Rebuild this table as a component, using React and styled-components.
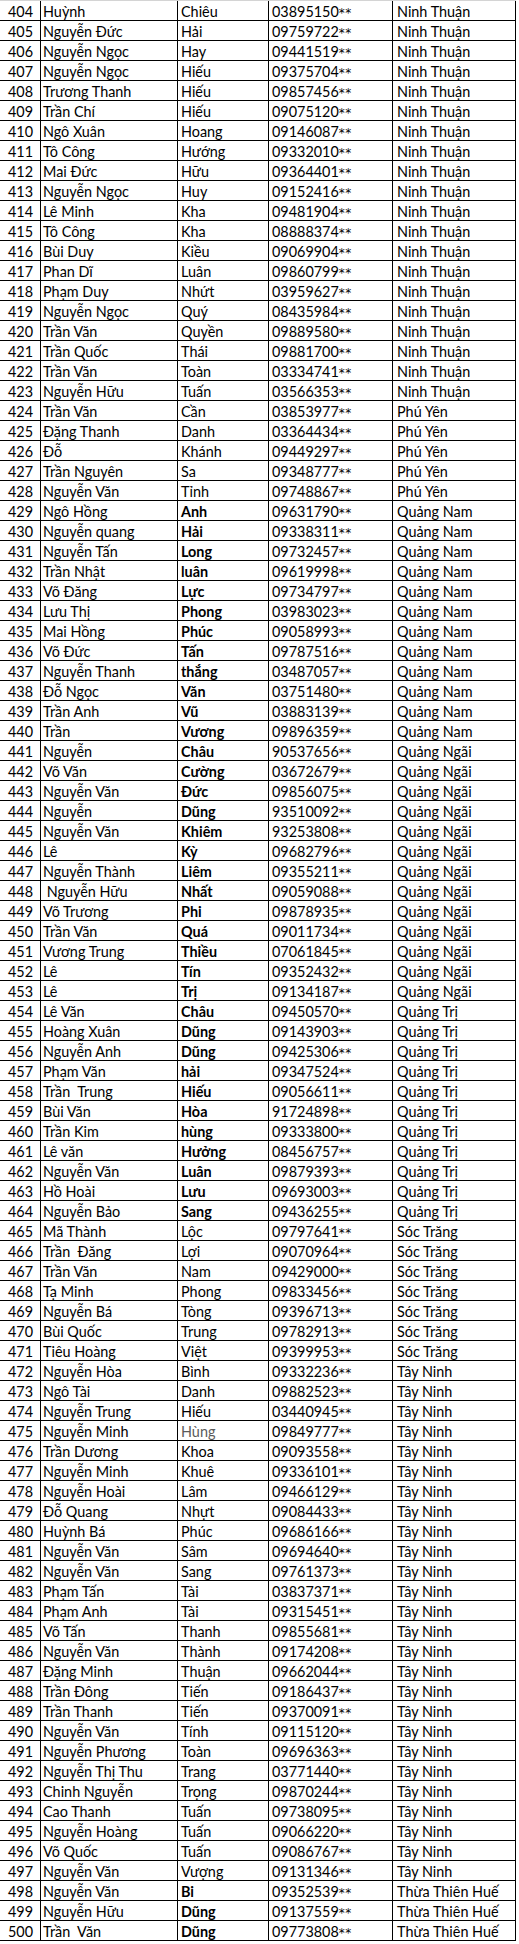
import React from "react";
import styled, { createGlobalStyle } from "styled-components";

const Global = createGlobalStyle`
  html, body { margin: 0; padding: 0; background: #ffffff; }
  body { font-family: Lato, "Open Sans", "Liberation Sans", sans-serif; }
`;

const raw = `404|Huỳnh|Chiêu|03895150|Ninh Thuận
405|Nguyễn Đức|Hải|09759722|Ninh Thuận
406|Nguyễn Ngọc|Hay|09441519|Ninh Thuận
407|Nguyễn Ngọc|Hiếu|09375704|Ninh Thuận
408|Trương Thanh|Hiếu|09857456|Ninh Thuận
409|Trần Chí|Hiếu|09075120|Ninh Thuận
410|Ngô Xuân|Hoang|09146087|Ninh Thuận
411|Tô Công|Hướng|09332010|Ninh Thuận
412|Mai Đức|Hữu|09364401|Ninh Thuận
413|Nguyễn Ngọc|Huy|09152416|Ninh Thuận
414|Lê Minh|Kha|09481904|Ninh Thuận
415|Tô Công|Kha|08888374|Ninh Thuận
416|Bùi Duy|Kiều|09069904|Ninh Thuận
417|Phan Dĩ|Luân|09860799|Ninh Thuận
418|Phạm Duy|Nhứt|03959627|Ninh Thuận
419|Nguyễn Ngọc|Quý|08435984|Ninh Thuận
420|Trần Văn|Quyền|09889580|Ninh Thuận
421|Trần Quốc|Thái|09881700|Ninh Thuận
422|Trần Văn|Toàn|03334741|Ninh Thuận
423|Nguyễn Hữu|Tuấn|03566353|Ninh Thuận
424|Trần Văn|Cần|03853977|Phú Yên
425|Đặng Thanh|Danh|03364434|Phú Yên
426|Đỗ|Khánh|09449297|Phú Yên
427|Trần Nguyên|Sa|09348777|Phú Yên
428|Nguyễn Văn|Tỉnh|09748867|Phú Yên
429|Ngô Hồng|*Anh|09631790|Quảng Nam
430|Nguyễn quang|*Hải|09338311|Quảng Nam
431|Nguyễn Tấn|*Long|09732457|Quảng Nam
432|Trần Nhật|*luân|09619998|Quảng Nam
433|Võ Đăng|*Lực|09734797|Quảng Nam
434|Lưu Thị|*Phong|03983023|Quảng Nam
435|Mai Hồng|*Phúc|09058993|Quảng Nam
436|Võ Đức|*Tấn|09787516|Quảng Nam
437|Nguyễn Thanh|*thắng|03487057|Quảng Nam
438|Đỗ Ngọc|*Văn|03751480|Quảng Nam
439|Trần Anh|*Vũ|03883139|Quảng Nam
440|Trần|*Vương|09896359|Quảng Nam
441|Nguyễn|*Châu|90537656|Quảng Ngãi
442|Võ Văn|*Cường|03672679|Quảng Ngãi
443|Nguyễn Văn|*Đức|09856075|Quảng Ngãi
444|Nguyễn|*Dũng|93510092|Quảng Ngãi
445|Nguyễn Văn|*Khiêm|93253808|Quảng Ngãi
446|Lê|*Kỳ|09682796|Quảng Ngãi
447|Nguyễn Thành|*Liêm|09355211|Quảng Ngãi
448| Nguyễn Hữu|*Nhất|09059088|Quảng Ngãi
449|Võ Trương|*Phi|09878935|Quảng Ngãi
450|Trần Văn|*Quá|09011734|Quảng Ngãi
451|Vương Trung|*Thiều|07061845|Quảng Ngãi
452|Lê|*Tín|09352432|Quảng Ngãi
453|Lê|*Trị|09134187|Quảng Ngãi
454|Lê Văn|*Châu|09450570|Quảng Trị
455|Hoàng Xuân|*Dũng|09143903|Quảng Trị
456|Nguyễn Anh|*Dũng|09425306|Quảng Trị
457|Phạm Văn|*hải|09347524|Quảng Trị
458|Trần  Trung|*Hiếu|09056611|Quảng Trị
459|Bùi Văn|*Hòa|91724898|Quảng Trị
460|Trần Kim|*hùng|09333800|Quảng Trị
461|Lê văn|*Hưởng|08456757|Quảng Trị
462|Nguyễn Văn|*Luân|09879393|Quảng Trị
463|Hồ Hoài|*Lưu|09693003|Quảng Trị
464|Nguyễn Bảo|*Sang|09436255|Quảng Trị
465|Mã Thành|Lộc|09797641|Sóc Trăng
466|Trần  Đăng|Lợi|09070964|Sóc Trăng
467|Trần Văn|Nam|09429000|Sóc Trăng
468|Tạ Minh|Phong|09833456|Sóc Trăng
469|Nguyễn Bá|Tòng|09396713|Sóc Trăng
470|Bùi Quốc|Trung|09782913|Sóc Trăng
471|Tiêu Hoàng|Việt|09399953|Sóc Trăng
472|Nguyễn Hòa|Bình|09332236|Tây Ninh
473|Ngô Tài|Danh|09882523|Tây Ninh
474|Nguyễn Trung|Hiếu|03440945|Tây Ninh
475|Nguyễn Minh|~Hùng|09849777|Tây Ninh
476|Trần Dương|Khoa|09093558|Tây Ninh
477|Nguyễn Minh|Khuê|09336101|Tây Ninh
478|Nguyễn Hoài|Lâm|09466129|Tây Ninh
479|Đỗ Quang|Nhựt|09084433|Tây Ninh
480|Huỳnh Bá|Phúc|09686166|Tây Ninh
481|Nguyễn Văn|Sâm|09694640|Tây Ninh
482|Nguyễn Văn|Sang|09761373|Tây Ninh
483|Phạm Tấn|Tài|03837371|Tây Ninh
484|Phạm Anh|Tài|09315451|Tây Ninh
485|Võ Tấn|Thanh|09855681|Tây Ninh
486|Nguyễn Văn|Thành|09174208|Tây Ninh
487|Đặng Minh|Thuận|09662044|Tây Ninh
488|Trần Đông|Tiến|09186437|Tây Ninh
489|Trần Thanh|Tiến|09370091|Tây Ninh
490|Nguyễn Văn|Tính|09115120|Tây Ninh
491|Nguyễn Phương|Toàn|09696363|Tây Ninh
492|Nguyễn Thị Thu|Trang|03771440|Tây Ninh
493|Chinh Nguyễn|Trọng|09870244|Tây Ninh
494|Cao Thanh|Tuấn|09738095|Tây Ninh
495|Nguyễn Hoàng|Tuấn|09066220|Tây Ninh
496|Võ Quốc|Tuấn|09086767|Tây Ninh
497|Nguyễn Văn|Vượng|09131346|Tây Ninh
498|Nguyễn Văn|*Bi|09352539|Thừa Thiên Huế
499|Nguyễn Hữu|*Dũng|09137559|Thừa Thiên Huế
500|Trần  Văn|*Dũng|09773808|Thừa Thiên Huế`;

const rows = raw.split("\n").map((line) => {
  const [no, last, first, phone, province] = line.split("|");
  const bold = first.startsWith("*");
  const muted = first.startsWith("~");
  return {
    no,
    last,
    first: bold || muted ? first.slice(1) : first,
    bold,
    muted,
    phone,
    province,
  };
});

const Sheet = styled.div`
  width: 516px;
  border-top: 1px solid #d4d4d4;
  color: #000;
  font-family: Lato, "Open Sans", "Liberation Sans", sans-serif;
  font-size: 14.4px;
`;

const Row = styled.div`
  display: grid;
  grid-template-columns: 41px 137px 91px 124px 123px;
  height: 20px;
  box-sizing: border-box;
  border-bottom: 1px solid #000;
`;

const Cell = styled.div`
  box-sizing: border-box;
  border-right: 1px solid #000;
  height: 19px;
  line-height: 19px;
  padding-top: 1px;
  padding-left: ${(p) => p.$pad ?? 3}px;
  padding-right: ${(p) => (p.$right ? 7 : 0)}px;
  text-align: ${(p) => (p.$right ? "right" : "left")};
  white-space: pre;
  overflow: hidden;
  font-weight: ${(p) => (p.$bold ? 700 : 400)};
  color: ${(p) => (p.$muted ? "#5a5a5a" : "#000")};
`;

const Stars = styled.span`
  font-family: "DejaVu Sans", sans-serif;
  font-size: 12px;
  letter-spacing: 0.5px;
`;

export default function App() {
  return (
    <>
      <Global />
      <Sheet>
        {rows.map((r) => (
          <Row key={r.no}>
            <Cell $right $pad={0}>{r.no}</Cell>
            <Cell $pad={2}>{r.last}</Cell>
            <Cell $bold={r.bold} $muted={r.muted}>{r.first}</Cell>
            <Cell>
              {r.phone}
              <Stars>**</Stars>
            </Cell>
            <Cell $pad={4}>{r.province}</Cell>
          </Row>
        ))}
      </Sheet>
    </>
  );
}
